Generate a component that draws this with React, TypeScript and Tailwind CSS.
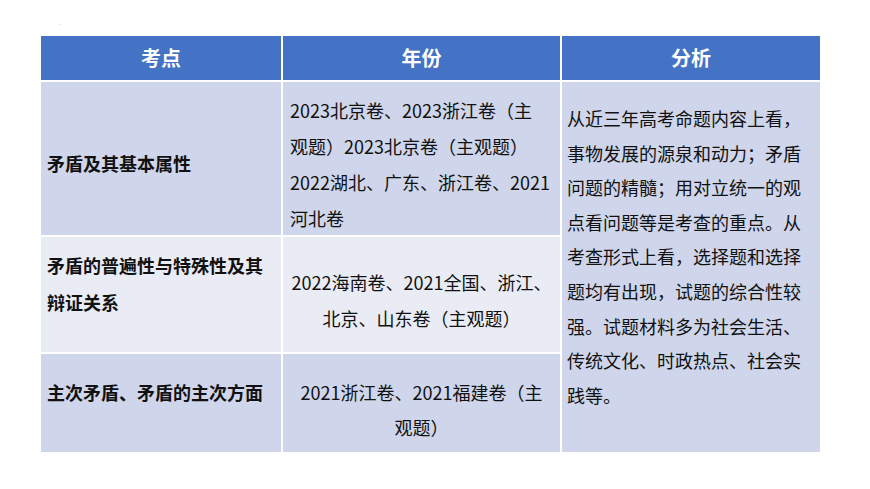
const font = { fontFamily: '"Noto Sans CJK SC", "Noto Sans", sans-serif' };

const analysis = [
  "从近三年高考命题内容上看，",
  "事物发展的源泉和动力；矛盾",
  "问题的精髓；用对立统一的观",
  "点看问题等是考查的重点。从",
  "考查形式上看，选择题和选择",
  "题均有出现，试题的综合性较",
  "强。试题材料多为社会生活、",
  "传统文化、时政热点、社会实",
  "践等。",
];

function Lines({ lines }: { lines: string[] }) {
  return (
    <>
      {lines.map((l, i) => (
        <div key={i} className="whitespace-nowrap">
          {l}
        </div>
      ))}
    </>
  );
}

export default function App() {
  return (
    <div className="relative h-[489px] w-[870px] overflow-hidden bg-white" style={font}>
      {/* stray mark from the slide */}
      <div className="absolute left-[60px] top-[24px] h-[1px] w-[1px] bg-gray-300" />

      <div className="ml-[41px] pt-[36px]">
        <div className="grid w-[779px] grid-cols-[240px_277px_258px] grid-rows-[44px_153px_115px_98px] gap-[2px] bg-white text-[18px] text-[#111]">
          {/* header */}
          <div className="flex items-center justify-center bg-[#4472c4] text-[20px] font-bold text-white">考点</div>
          <div className="flex items-center justify-center bg-[#4472c4] text-[20px] font-bold text-white">年份</div>
          <div className="flex items-center justify-center bg-[#4472c4] text-[20px] font-bold text-white">分析</div>

          {/* row 1 */}
          <div className="flex items-center bg-[#cfd5ea] pl-[6px] pt-[9px] font-bold leading-[37px]">
            矛盾及其基本属性
          </div>
          <div className="flex flex-col justify-center bg-[#cfd5ea] pl-[7px] pt-[11px] leading-[36px]">
            <Lines
              lines={[
                "2023北京卷、2023浙江卷（主",
                "观题）2023北京卷（主观题）",
                "2022湖北、广东、浙江卷、2021",
                "河北卷",
              ]}
            />
          </div>
          <div className="row-span-3 bg-[#cfd5ea] pl-[5px] pt-[19px] leading-[34.6px]">
            <Lines lines={analysis} />
          </div>

          {/* row 2 */}
          <div className="flex flex-col justify-center bg-[#e9ebf5] pb-[22px] pl-[6px] font-bold leading-[37px]">
            <Lines lines={["矛盾的普遍性与特殊性及其", "辩证关系"]} />
          </div>
          <div className="flex flex-col items-center justify-center bg-[#e9ebf5] pt-[11px] text-center leading-[36px]">
            <Lines lines={["2022海南卷、2021全国、浙江、", "北京、山东卷（主观题）"]} />
          </div>

          {/* row 3 */}
          <div className="flex items-center bg-[#cfd5ea] pb-[22px] pl-[6px] font-bold leading-[37px]">
            主次矛盾、矛盾的主次方面
          </div>
          <div className="flex flex-col items-center justify-center bg-[#cfd5ea] pt-[13px] text-center leading-[35px]">
            <Lines lines={["2021浙江卷、2021福建卷（主", "观题）"]} />
          </div>
        </div>
      </div>
    </div>
  );
}
